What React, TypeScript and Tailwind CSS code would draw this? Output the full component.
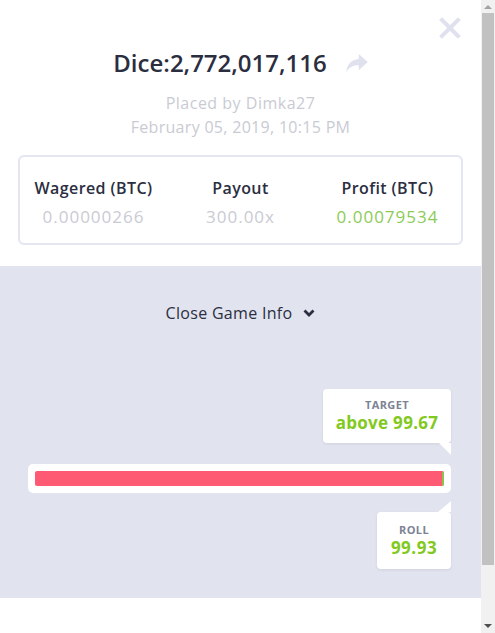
const FONT = { fontFamily: "'Open Sans', Lato, sans-serif" };

const stats = [
  { label: "Wagered (BTC)", value: "0.00000266", tone: "text-[#c9cbd3]" },
  { label: "Payout", value: "300.00x", tone: "text-[#c9cbd3]" },
  { label: "Profit (BTC)", value: "0.00079534", tone: "text-[#8ccb57]" },
];

function ShareIcon() {
  return (
    <svg viewBox="0 0 24 20" className="h-[18px] w-[22px]" fill="#dfe1ee">
      <path d="M14 0 L24 9 L14 18 L14 12.5 C8 12.5 3.5 14.5 0 20 C1 12 5 6.5 14 5.5 Z" />
    </svg>
  );
}

function Scrollbar() {
  return (
    <div className="flex h-[633px] w-[14px] shrink-0 flex-col bg-[#f1f1f1]">
      <div className="flex h-[13px] items-center justify-center">
        <span className="h-0 w-0 border-x-[4px] border-b-[4px] border-x-transparent border-b-[#a3a3a3]" />
      </div>
      <div className="mx-[1px] h-[552px] bg-[#c1c1c1]" />
      <div className="flex flex-1 items-end justify-center pb-[5px]">
        <span className="h-0 w-0 border-x-[4px] border-t-[4px] border-x-transparent border-t-[#505050]" />
      </div>
    </div>
  );
}

export default function App() {
  return (
    <div className="flex h-[633px] overflow-hidden bg-white text-[#2b2e3f]" style={FONT}>
      <div className="min-w-0 flex-1">
        <div className="relative flex flex-col items-center pt-[47px]">
          <button className="absolute right-[20px] top-[17px] h-[22px] w-[22px]">
            <svg viewBox="0 0 22 22" className="h-[22px] w-[22px]" stroke="#dfe1ee" strokeWidth="4" strokeLinecap="square">
              <path d="M3 3 L19 19 M19 3 L3 19" />
            </svg>
          </button>

          <div className="flex items-center gap-[19px]">
            <h1 className="text-[24px] font-semibold leading-[32px]">Dice:2,772,017,116</h1>
            <ShareIcon />
          </div>
          <p className="mt-[12px] text-[16px] leading-[24px] tracking-[0.5px] text-[#c9cbd3]">Placed by Dimka27</p>
          <p className="text-[16px] leading-[24px] tracking-[0.3px] text-[#c9cbd3]">February 05, 2019, 10:15 PM</p>

          <div className="mt-[16px] mb-[21px] grid h-[90px] w-[445px] grid-cols-3 rounded-[6px] border-2 border-[#e3e5f0] pt-[19px] text-center">
            {stats.map((s) => (
              <div key={s.label}>
                <p className="text-[16px] font-semibold leading-[24px] tracking-[0.4px]">{s.label}</p>
                <p className={`mt-[5px] text-[17px] leading-[24px] tracking-[1px] ${s.tone}`}>{s.value}</p>
              </div>
            ))}
          </div>
        </div>

        <div className="flex h-[332px] flex-col bg-[#e1e3ef] pt-[35px]">
          <div className="flex items-center justify-center gap-[11px] text-[16px] leading-[24px] tracking-[0.3px]">
            <span>Close Game Info</span>
            <svg viewBox="0 0 12 8" className="h-[8px] w-[12px]" fill="none" stroke="#2b2e3f" strokeWidth="2.8">
              <path d="M1.5 1.5 L6 6 L10.5 1.5" />
            </svg>
          </div>

          <div className="mt-[64px] flex flex-col items-end pr-[30px] pl-[28px]">
            <div className="relative h-[54px] w-[128px] rounded-[4px] bg-white text-center shadow-[0_1px_3px_rgba(0,0,0,0.08)]">
              <p className="pt-[9px] text-[11px] font-bold leading-[14px] tracking-[0.4px] text-[#7d8294]">TARGET</p>
              <p className="text-[17px] font-bold leading-[22px] tracking-[0.3px] text-[#82c91e]">above 99.67</p>
              <span className="absolute right-0 top-full h-0 w-0 border-l-[12px] border-t-[12px] border-l-transparent border-t-white" />
            </div>

            <div className="mt-[21px] flex h-[29px] w-full items-center rounded-[5px] bg-white px-[7px]">
              <div className="flex h-[15px] w-full overflow-hidden rounded-[2px] bg-[#ff5a74]">
                <div className="flex-1" />
                <div className="w-[2px] bg-[#8bc34a]" />
              </div>
            </div>

            <div className="relative mt-[19px] h-[57px] w-[74px] rounded-[4px] bg-white text-center shadow-[0_1px_3px_rgba(0,0,0,0.08)]">
              <span className="absolute bottom-full right-0 h-0 w-0 border-b-[11px] border-l-[13px] border-b-white border-l-transparent" />
              <p className="pt-[11px] text-[11px] font-bold leading-[14px] tracking-[0.4px] text-[#7d8294]">ROLL</p>
              <p className="text-[17px] font-bold leading-[22px] tracking-[0.5px] text-[#82c91e]">99.93</p>
            </div>
          </div>
        </div>

        <div className="h-[96px] bg-white" />
      </div>
      <Scrollbar />
    </div>
  );
}
